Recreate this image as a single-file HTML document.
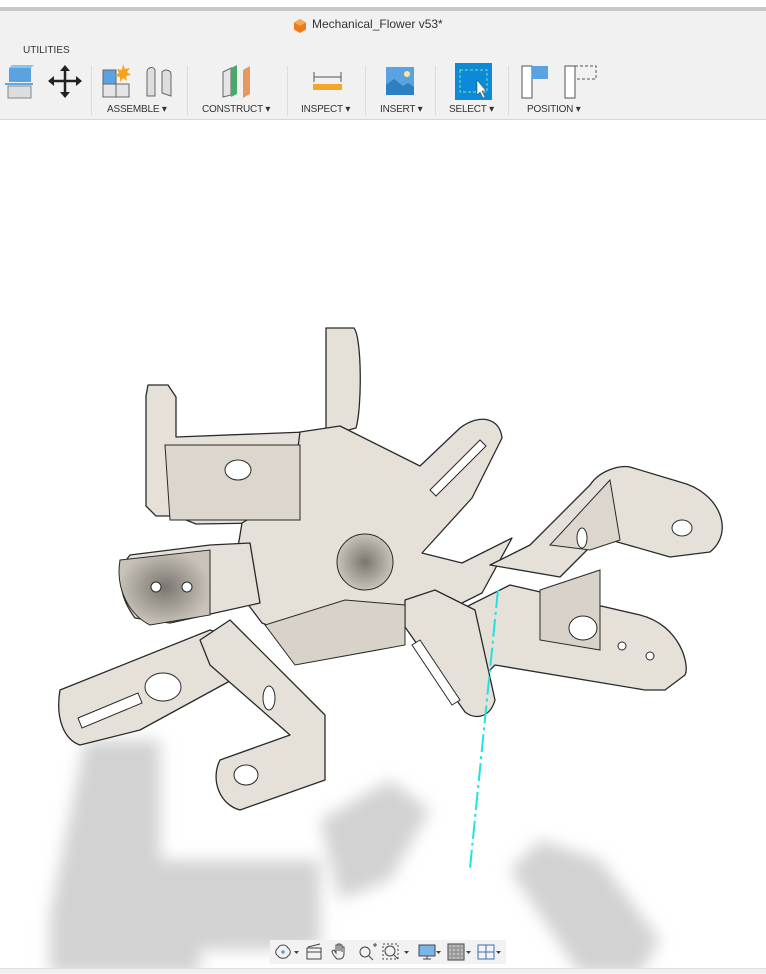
<!DOCTYPE html>
<html><head><meta charset="utf-8"><style>
*{margin:0;padding:0;box-sizing:border-box}
body{width:766px;height:974px;background:#fff;overflow:hidden;position:relative;font-family:"Liberation Sans",sans-serif}
.topband{position:absolute;left:0;top:0;width:766px;height:7px;background:#fff}
.topline{position:absolute;left:0;top:7px;width:766px;height:4px;background:#c8c8c8}
.tb{position:absolute;left:0;top:11px;width:766px;height:109px;background:#f1f1f1;border-bottom:1px solid #d8d8d8}
.title{position:absolute;left:293px;top:17px;font-size:12px;color:#333}
.lbl{position:absolute;font-size:10px;color:#333;top:104px;letter-spacing:-0.2px}
.sep{position:absolute;top:66px;width:1px;height:50px;background:#dcdcdc}
.nav{position:absolute;left:270px;top:940px;width:236px;height:24px;background:#f2f2f2}
</style></head><body>
<div class="topband"></div><div class="topline"></div>
<div class="tb"></div>
<svg style="position:absolute;left:292px;top:18px" width="16" height="16" viewBox="0 0 16 16"><path d="M8 1L14 4.5V11.5L8 15L2 11.5V4.5Z" fill="#f07a1a"/><path d="M8 1L14 4.5L8 8L2 4.5Z" fill="#f9a55a"/></svg>
<div class="title" style="left:312px">Mechanical_Flower v53*</div>
<div style="position:absolute;left:23px;top:45px;font-size:10px;color:#333">UTILITIES</div>
<svg style="position:absolute;left:0;top:60px" width="600" height="45" viewBox="0 0 600 45">
 <path d="M9 8h22v14H9z" fill="#5ba3e0"/><path d="M9 8l3-3h22l-3 3z" fill="#8cc3ee"/>
 <path d="M5 24h28" stroke="#2b8fe0" stroke-width="1.5"/>
 <path d="M8 26h23v12H8z" fill="#ddd" stroke="#888"/>
 <path d="M65 7v29M50 21h30" stroke="#222" stroke-width="2.5"/>
 <path d="M65 5l-5 6h10zM65 38l-5-6h10zM48 21l6-5v10zM82 21l-6-5v10z" fill="#222"/>
 <path d="M103 10h13v14h-13z" fill="#5ba3e0" stroke="#666"/>
 <path d="M103 24h13v13h-13zM116 24h13v13h-13z" fill="#e5e5e5" stroke="#666"/>
 <path d="M123 4l2 5 5-1-3 4 4 3-5 1 1 5-4-3-3 4v-5l-5-1 4-3-2-4 5 1z" fill="#f7a21b"/>
 <path d="M147 12c0-5 7-6 8-2v26h-8z" fill="#ddd" stroke="#666"/>
 <path d="M162 12c4-4 9-1 9 2v22l-9-3z" fill="#ddd" stroke="#666"/>
 <path d="M223 12l8-4v27l-8 2z" fill="#e5e5e5" stroke="#666"/>
 <path d="M231 8l6-3v29l-6 3z" fill="#4aa86a"/>
 <path d="M243 10l7-4v28l-7 4z" fill="#e59860"/>
 <path d="M314 12v10M341 12v10M314 17h27" stroke="#555"/>
 <rect x="313" y="24" width="29" height="6" fill="#f3a629"/>
 <rect x="386" y="7" width="28" height="28" fill="#5ba3e0"/>
 <path d="M386 35v-10l8-6 9 7 5-3 6 4v8z" fill="#2c7fc3"/><circle cx="407" cy="14" r="3" fill="#ffe79a"/>
 <rect x="455" y="3" width="37" height="37" fill="#0a8ad8"/>
 <rect x="460" y="10" width="27" height="22" fill="none" stroke="#8fe08f" stroke-dasharray="3 2"/>
 <path d="M477 20v15l3-3 3 6 2-1-3-6h4z" fill="#fff" stroke="#333" stroke-width=".5"/>
 <rect x="522" y="6" width="10" height="32" fill="#fff" stroke="#555"/>
 <rect x="532" y="6" width="16" height="13" fill="#5ba3e0"/>
 <rect x="565" y="6" width="10" height="32" fill="#fff" stroke="#555"/>
 <path d="M575 6h21v13h-21" fill="none" stroke="#555" stroke-dasharray="3 2"/>
</svg>
<div class="sep" style="left:91px"></div><div class="sep" style="left:187px"></div><div class="sep" style="left:287px"></div><div class="sep" style="left:365px"></div><div class="sep" style="left:435px"></div><div class="sep" style="left:508px"></div>
<div class="lbl" style="left:107px">ASSEMBLE ▾</div>
<div class="lbl" style="left:202px">CONSTRUCT ▾</div>
<div class="lbl" style="left:301px">INSPECT ▾</div>
<div class="lbl" style="left:380px">INSERT ▾</div>
<div class="lbl" style="left:449px">SELECT ▾</div>
<div class="lbl" style="left:527px">POSITION ▾</div>

<svg style="position:absolute;left:0;top:122px" width="766" height="852" viewBox="0 122 766 852">
 <defs><filter id="b"><feGaussianBlur stdDeviation="8"/></filter>
 <radialGradient id="h"><stop offset="0" stop-color="#7a766f"/><stop offset="1" stop-color="#c8c2b8"/></radialGradient></defs>
 <g fill="#d2d2d2" filter="url(#b)">
  <path d="M85 740h75v120h160v90h-120v24h-150v-60z"/>
  <path d="M320 820l70-40 40 30-40 70-50 20z"/>
  <path d="M510 870l30-30 60 20 60 80-20 34h-60z"/>
 </g>
 <g fill="#e6e1d8" stroke="#2a2a2a" stroke-width="1.3" stroke-linejoin="round">
  <path d="M326 328h28c8 10 8 80 2 100l-30 8z"/>
  <path d="M148 385h20l8 12v40l130-5 20 10v80l-130 2-20-8-20 0-10-10v-110z"/>
  <path d="M300 432l40-6 80 40 40-38c20-15 40-10 42 10l-30 60-50 55 40 10 50-25-30 55-60 30-110 20-50-20-30-40 10-60 50-30z"/>
  <path d="M490 565l40-20 60-60c10-15 30-20 40-18l50 15c40 10 55 50 30 70l-40 5-70-20-40 40z"/>
  <path d="M460 610l50-25 130 30c40 10 50 50 45 60l-20 15-20 0-150-25-10 10z"/>
  <path d="M405 600l30-10 40 20 20 90c-5 18-20 20-30 12l-60-85z"/>
  <path d="M130 555l80-10 40-2 10 60-90 20-35-5c-15-20-20-45-5-63z"/>
  <path d="M60 690l150-60 30 10 10 30-110 60-60 15c-15-5-25-25-20-55z"/>
  <path d="M200 640l30-20 80 80 15 15 0 65-85 30c-20-5-30-30-20-50l70-25-80-70z"/>
 </g>
 <g stroke="#2a2a2a" stroke-width="1">
  <path d="M165 445h135v75h-130z" fill="#dcd6cc"/>
  <path d="M345 600l60 5 0 40-110 20-30-40z" fill="#d8d2c8"/>
  <path d="M540 590l60-20v80l-60-10z" fill="#d8d2c8"/>
  <path d="M610 480l10 60-30 10-40-5z" fill="#dcd6cc"/>
  <path d="M120 560l90-10v65l-60 10c-20-10-35-35-30-65z" fill="url(#h)"/>
 </g>
 <circle cx="365" cy="562" r="28" fill="url(#h)" stroke="#2a2a2a"/>
 <g fill="#fff" stroke="#2a2a2a">
  <ellipse cx="238" cy="470" rx="13" ry="10"/>
  <ellipse cx="163" cy="687" rx="18" ry="14"/>
  <ellipse cx="246" cy="775" rx="12" ry="10"/>
  <ellipse cx="682" cy="528" rx="10" ry="8"/>
  <ellipse cx="583" cy="628" rx="14" ry="12"/>
  <ellipse cx="622" cy="646" rx="4" ry="4"/>
  <ellipse cx="650" cy="656" rx="4" ry="4"/>
  <ellipse cx="156" cy="587" rx="5" ry="5"/><ellipse cx="187" cy="587" rx="5" ry="5"/>
  <ellipse cx="269" cy="698" rx="6" ry="12"/>
  <ellipse cx="582" cy="538" rx="5" ry="10"/>
  <path d="M78 718l60-25 4 10-60 25z"/>
  <path d="M420 640l40 60-8 5-40-60z"/>
  <path d="M430 490l50-50 6 6-50 50z"/>
 </g>
 <path d="M498 590L470 868" stroke="#1fe3e3" stroke-width="2" stroke-dasharray="18 4 3 4"/>
</svg>

<div class="nav"></div>
<svg style="position:absolute;left:270px;top:940px" width="236" height="24" viewBox="0 0 236 24">
 <g fill="none" stroke="#444" stroke-width="1">
  <path d="M8 8c2-4 8-4 10 0 3 2 3 6 0 8-2 3-8 3-10 0-3-2-3-6 0-8z"/><path d="M11 12h4M13 10v4" stroke="#1a7fd4"/>
  <rect x="37" y="8" width="14" height="11"/><path d="M37 12h14M38 7l12-3"/>
  <path d="M67 19c-3-3-5-6-5-8l2-1 2 3V5h2v6V4h2v7V5h2v7V7h2v7c0 3-2 5-4 5z"/>
  <circle cx="95" cy="12" r="5"/><path d="M99 16l4 4M103 5h4M105 3v4"/>
  <rect x="113" y="4" width="15" height="15" stroke-dasharray="2 2"/><circle cx="120" cy="11" r="5"/><path d="M124 15l4 4"/>
  <rect x="149" y="5" width="16" height="11" fill="#7ab6e8" stroke="#445"/><path d="M153 19h8M157 16v3"/>
  <rect x="178" y="4" width="16" height="16" fill="#bbb"/><path d="M178 8h16M178 12h16M178 16h16M182 4v16M186 4v16M190 4v16" stroke="#888"/>
  <rect x="208" y="5" width="16" height="14" stroke="#3a6fb0"/><path d="M216 5v14M208 12h16" stroke="#3a6fb0"/>
 </g>
 <g fill="#444"><path d="M24 11h5l-2.5 3z"/><path d="M134 11h5l-2.5 3z"/><path d="M166 11h5l-2.5 3z"/><path d="M196 11h5l-2.5 3z"/><path d="M226 11h5l-2.5 3z"/></g>
</svg>
<div style="position:absolute;left:0;top:968px;width:766px;height:6px;background:#f0f0f0;border-top:1px solid #ddd"></div>
</body></html>
